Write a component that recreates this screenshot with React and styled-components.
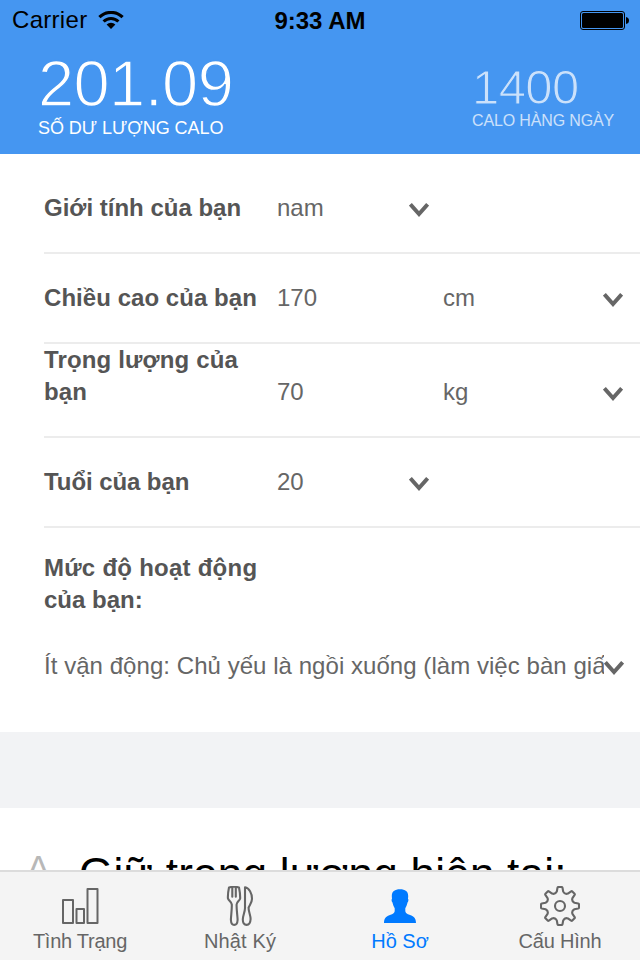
import React from 'react';
import styled, { createGlobalStyle } from 'styled-components';

const BLUE = '#4596f1';

const GlobalStyle = createGlobalStyle`
  *, *::before, *::after { box-sizing: border-box; }
  html, body { margin: 0; padding: 0; }
  body {
    background: #fff;
    font-family: "Liberation Sans", Arial, sans-serif;
    overflow: hidden;
  }
`;

const Screen = styled.div`
  width: 640px;
  height: 960px;
  display: flex;
  flex-direction: column;
  overflow: hidden;
  background: #fff;
`;

const Header = styled.header`
  height: 154px;
  flex: none;
  background: ${BLUE};
`;

const StatusBar = styled.div`
  display: grid;
  grid-template-columns: 1fr auto 1fr;
  align-items: center;
  height: 40px;
  padding: 0 11px 0 12px;
  color: #000;
  font-size: 24px;
  line-height: 42px;
`;

const Carrier = styled.div`
  display: flex;
  align-items: center;
  gap: 11px;
  letter-spacing: 0.3px;
  height: 40px;
`;

const Clock = styled.div`
  font-weight: 700;
  height: 40px;
  padding-right: 1px;
`;

const BatteryIcon = styled.svg`
  justify-self: end;
  display: block;
`;

const Totals = styled.div`
  display: flex;
  justify-content: space-between;
  padding: 0 26px 0 38px;
`;

const Total = styled.div`
  display: flex;
  flex-direction: column;
  color: #fff;
  padding-top: ${(p) => (p.$small ? 23 : 11)}px;
  opacity: ${(p) => (p.$small ? 0.72 : 1)};
`;

const TotalNumber = styled.div`
  font-size: ${(p) => (p.$small ? 49 : 65)}px;
  line-height: ${(p) => (p.$small ? 49 : 66)}px;
  letter-spacing: -0.6px;
  -webkit-text-stroke: ${(p) => (p.$small ? 1.1 : 1.4)}px ${BLUE};
`;

const TotalCaption = styled.div`
  font-size: ${(p) => (p.$small ? 16 : 18)}px;
  line-height: ${(p) => (p.$small ? 18 : 22)}px;
  letter-spacing: ${(p) => (p.$small ? -0.15 : -0.05)}px;
  white-space: nowrap;
`;

const Content = styled.main`
  flex: 1;
  min-height: 0;
  overflow: hidden;
`;

const Row = styled.div`
  display: grid;
  grid-template-columns: 233px ${(p) => (p.$unit ? '166px 160px' : '132px')} 20px;
  align-items: end;
  height: ${(p) => p.$height}px;
  margin-left: 44px;
  padding-bottom: 28px;
  border-bottom: 2px solid #ececec;
  font-size: 24px;
  line-height: 32px;
  color: #666;
`;

const Label = styled.div`
  font-weight: 700;
  color: #555;
  font-size: 24px;
  line-height: 32px;
  letter-spacing: ${(p) => p.$tracking || 0}px;
`;

const Value = styled.div`
  white-space: nowrap;
`;

const ChevronIcon = styled.svg`
  display: block;
  margin-bottom: 7px;
  flex: none;
`;

const Activity = styled.section`
  height: 204px;
  padding: 24px 15px 0 44px;
`;

const ActivitySelect = styled.div`
  display: flex;
  align-items: flex-end;
  margin-top: 34px;
  font-size: 24px;
  line-height: 32px;
  color: #666;
`;

const ActivityText = styled.div`
  width: 560px;
  flex: none;
  overflow: hidden;
  white-space: nowrap;
  letter-spacing: 0.05px;
`;

const Gap = styled.div`
  height: 76px;
  background: #f2f3f5;
`;

const Goal = styled.div`
  display: flex;
  padding: 42px 0 0 27px;
  font-size: 44px;
  line-height: 48px;
  letter-spacing: 0.25px;
  white-space: nowrap;
  color: #000;
`;

const GoalMark = styled.div`
  width: 52px;
  margin-top: -7px;
  color: #b8b8b8;
  font-size: 34px;
`;

const TabBar = styled.nav`
  flex: none;
  display: grid;
  grid-template-columns: repeat(4, 1fr);
  height: 90px;
  border-top: 2px solid #dcdcdc;
  background: #f4f4f4;
`;

const Tab = styled.div`
  display: flex;
  flex-direction: column;
  align-items: center;
  padding-top: 14px;
  color: ${(p) => (p.$active ? '#007aff' : '#666')};
  font-size: 20px;
  line-height: 26px;
  letter-spacing: ${(p) => p.$tracking || 0}px;

  svg { display: block; margin-bottom: 2px; }
`;

const Chevron = () => (
  <ChevronIcon width="20" height="14" viewBox="0 0 20 14">
    <path d="M1.4 1.3 L10 11 L18.6 1.3" fill="none" stroke="#666" strokeWidth="3.9" />
  </ChevronIcon>
);

const Wifi = () => (
  <svg width="26" height="19" viewBox="0 0 26 19">
    <g fill="none" stroke="#000" strokeWidth="3.1">
      <path d="M1.4 6.2 A16.4 16.4 0 0 1 24.6 6.2" />
      <path d="M5.6 10.5 A10.5 10.5 0 0 1 20.4 10.5" />
    </g>
    <path d="M8.6 13.6 A6.2 6.2 0 0 1 17.4 13.6 L13 18 Z" />
  </svg>
);

const Battery = () => (
  <BatteryIcon width="49" height="19" viewBox="0 0 49 19">
    <rect x="0.5" y="0.5" width="44" height="18" rx="2.5" fill="none" stroke="#000" />
    <rect x="2" y="2" width="41" height="15" rx="1.5" />
    <path d="M46 6 Q49 6.5 49 9.5 Q49 12.5 46 13 Z" />
  </BatteryIcon>
);

const BarsIcon = () => (
  <svg width="40" height="40" viewBox="0 0 40 40" fill="none" stroke="currentColor" strokeWidth="2" strokeLinejoin="round">
    <rect x="3" y="14" width="10" height="23" />
    <rect x="16.5" y="23" width="7.5" height="14" />
    <rect x="27.5" y="3" width="10" height="34" />
  </svg>
);

const CutleryIcon = () => (
  <svg width="40" height="40" viewBox="0 0 40 40" fill="none" stroke="currentColor" strokeWidth="2.1" strokeLinejoin="round" strokeLinecap="round">
    <path d="M9 1.4 C11.5 0.8 16.5 0.8 19 1.4 C19.8 5 20.2 9 20.2 12.3 C19.8 14.8 16.8 15.6 16.6 18.5 C16.4 24 17.6 30 17.6 34 C17.4 37.6 16 38.9 14.2 38.9 C12.2 38.9 11.1 37.6 10.9 34 C10.9 30 12 24 11.8 18.5 C11.4 15.6 8.4 14.8 7.9 12.3 C7.8 9 8.2 5 9 1.4 Z" />
    <path d="M12.3 1.8 V10.8 M15.8 1.8 V10.8" />
    <path d="M25 1.2 C29.2 2 32 7.2 32 12.8 C32 17 29.4 19 28.6 21.6 C28.4 25.5 30.6 29 30.6 33 C30.4 37 28.6 38.9 26.6 38.9 C24.2 38.9 22.8 37 22.8 33.5 C22.8 29.5 25 26 25 22 Z" />
  </svg>
);

const PersonIcon = () => (
  <svg width="40" height="40" viewBox="0 0 40 40" fill="currentColor">
    <path d="M20 3.2 C25.2 3.2 28.3 5.2 28.2 10.2 L28 12.8 C28.8 13.4 28.4 15.8 27.5 16.6 C27 19 26.2 20.8 25.3 22.2 V25.2 C25.6 27 27.4 28 29.4 28.8 C33 30 36 31.4 36 36.9 H4 C4 31.4 7 30 10.6 28.8 C12.6 28 14.4 27 14.7 25.2 V22.2 C13.8 20.8 13 19 12.5 16.6 C11.6 15.8 11.2 13.4 12 12.8 L11.8 10.2 C11.7 5.2 14.8 3.2 20 3.2 Z" />
  </svg>
);

const rotate = ([x, y], deg) => {
  const a = (deg * Math.PI) / 180;
  const px = 20 + x * Math.cos(a) - y * Math.sin(a);
  const py = 20 + x * Math.sin(a) + y * Math.cos(a);
  return `${px.toFixed(2)} ${py.toFixed(2)}`;
};

const gearPath =
  Array.from({ length: 8 }, (_, i) => {
    const p = (x, y) => rotate([x, y], i * 45);
    return `${i ? 'L' : 'M'}${p(-3.2, -14.4)} L${p(-2.5, -18.2)} Q${p(-2.3, -19)} ${p(-1.6, -19)} L${p(1.6, -19)} Q${p(2.3, -19)} ${p(2.5, -18.2)} L${p(3.2, -14.4)} Q${p(4.7, -11.4)} ${rotate([-3.2, -14.4], i * 45 + 45)}`;
  }).join(' ') + ' Z';

const GearIcon = () => (
  <svg width="40" height="40" viewBox="0 0 40 40" fill="none" stroke="currentColor" strokeWidth="2.1" strokeLinejoin="round">
    <path d={gearPath} />
    <circle cx="20" cy="20" r="5" />
  </svg>
);

export default function App() {
  return (
    <Screen>
      <GlobalStyle />
      <Header>
        <StatusBar>
          <Carrier>Carrier<Wifi /></Carrier>
          <Clock>9:33 AM</Clock>
          <Battery />
        </StatusBar>
        <Totals>
          <Total>
            <TotalNumber>201.09</TotalNumber>
            <TotalCaption>SỐ DƯ LƯỢNG CALO</TotalCaption>
          </Total>
          <Total $small>
            <TotalNumber $small>1400</TotalNumber>
            <TotalCaption $small>CALO HÀNG NGÀY</TotalCaption>
          </Total>
        </Totals>
      </Header>
      <Content>
        <Row $height={100}>
          <Label>Giới tính của bạn</Label>
          <Value>nam</Value>
          <Chevron />
        </Row>
        <Row $height={90} $unit>
          <Label $tracking={0.05}>Chiều cao của bạn</Label>
          <Value>170</Value>
          <Value>cm</Value>
          <Chevron />
        </Row>
        <Row $height={94} $unit>
          <Label $tracking={0.15}>Trọng lượng của<br />bạn</Label>
          <Value>70</Value>
          <Value>kg</Value>
          <Chevron />
        </Row>
        <Row $height={90}>
          <Label $tracking={-0.08}>Tuổi của bạn</Label>
          <Value>20</Value>
          <Chevron />
        </Row>
        <Activity>
          <Label $tracking={0.25}>Mức độ hoạt động</Label>
          <Label>của bạn:</Label>
          <ActivitySelect>
            <ActivityText>Ít vận động: Chủ yếu là ngồi xuống (làm việc bàn giấy)</ActivityText>
            <Chevron />
          </ActivitySelect>
        </Activity>
        <Gap />
        <Goal>
          <GoalMark>A</GoalMark>
          <div>Giữ trọng lượng hiện tại:</div>
        </Goal>
      </Content>
      <TabBar>
        <Tab $tracking={-0.25}><BarsIcon />Tình Trạng</Tab>
        <Tab $tracking={0.15}><CutleryIcon />Nhật Ký</Tab>
        <Tab $active><PersonIcon />Hồ Sơ</Tab>
        <Tab $tracking={-0.2}><GearIcon />Cấu Hình</Tab>
      </TabBar>
    </Screen>
  );
}
